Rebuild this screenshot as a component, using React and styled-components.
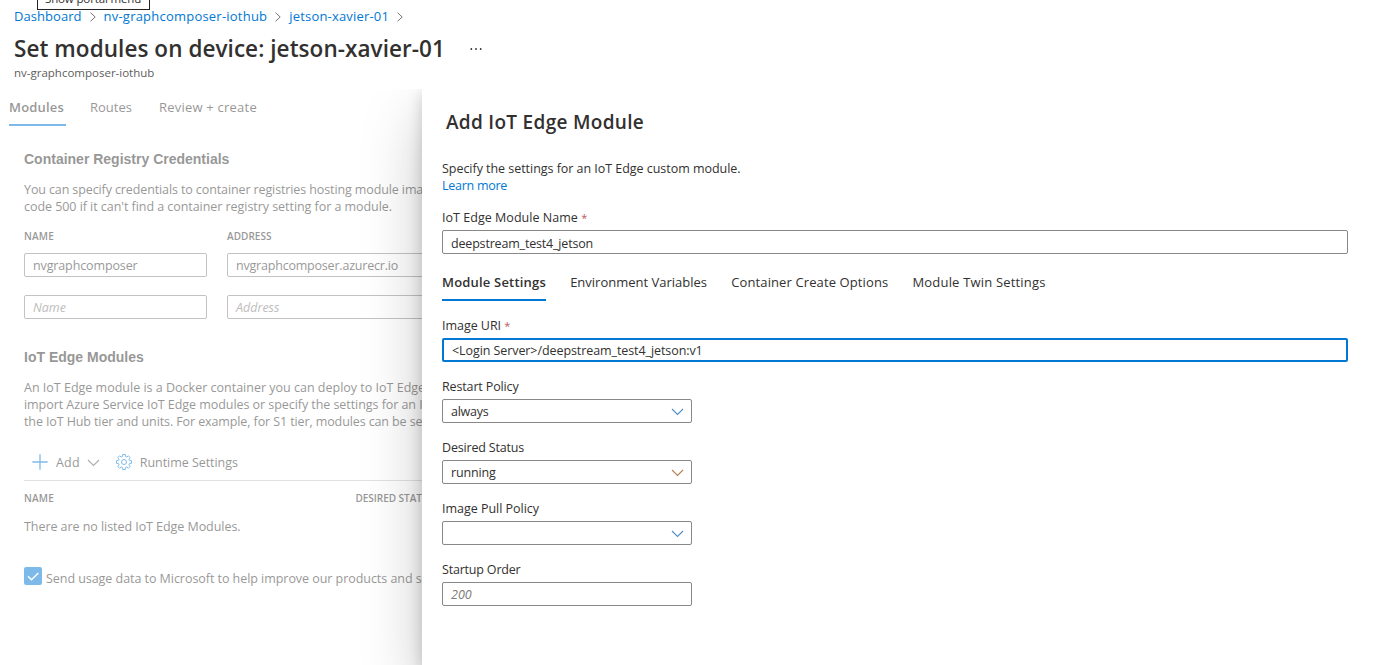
import React from 'react';
import styled, { createGlobalStyle } from 'styled-components';

const blue = '#0078d4';
const ink = '#323130';

const GlobalStyle = createGlobalStyle`
  * { box-sizing: border-box; }
  body {
    margin: 0;
    background: #fff;
    color: ${ink};
    font: 12.5px/17px "Open Sans", "Noto Sans", sans-serif;
  }
`;

const Page = styled.div`
  height: 665px;
  display: flex;
  flex-direction: column;
  overflow: hidden;
  position: relative;
  white-space: nowrap;
`;

const Text = styled.span`
  letter-spacing: ${(p) => p.$ls || 0}px;
`;

const Line = styled(Text)`
  display: block;
`;

const Tooltip = styled.div`
  position: absolute;
  top: -14px;
  left: 37px;
  width: 113px;
  height: 24px;
  padding-left: 7px;
  border: 1px solid #222;
  background: #fff;
  font-size: 11.5px;
  line-height: 23px;
  letter-spacing: -0.14px;
`;

const Header = styled.header`
  height: 89px;
  flex: none;
  padding: 8px 14px 0;
`;

const Breadcrumb = styled.nav`
  display: flex;
  align-items: center;
  font-size: 13px;
  height: 17px;
  svg { margin: 0 7.5px 0 8px; }
`;

const Crumb = styled.a`
  color: ${blue};
  letter-spacing: ${(p) => p.$ls}px;
`;

const TitleRow = styled.div`
  display: flex;
  align-items: center;
  gap: 25px;
  margin-top: 9px;
`;

const Title = styled.h1`
  margin: 0;
  font-size: 22.5px;
  font-weight: 600;
  line-height: 30px;
  letter-spacing: 0.06px;
`;

const Subtitle = styled.div`
  margin-top: 1px;
  font-size: 11.5px;
  line-height: 16px;
  color: #605e5c;
`;

const Body = styled.div`
  flex: 1;
  min-height: 0;
  display: flex;
  overflow: hidden;
`;

const Main = styled.main`
  width: 422px;
  flex: none;
  overflow: hidden;
  padding: 10px 0 0 24px;
`;

const Faded = styled.div`
  opacity: 0.5;
`;

const TabBar = styled.div`
  display: flex;
  gap: ${(p) => p.$gap}px;
  margin: ${(p) => p.$margin || 0};
  font-size: 13px;
`;

const Tab = styled.div`
  padding: 0 ${(p) => p.$pad || 0}px 8px 0;
  font-weight: ${(p) => (p.$active ? 600 : 400)};
  border-bottom: 2px solid ${(p) => (p.$active ? blue : 'transparent')};
  letter-spacing: ${(p) => p.$ls}px;
`;

const Heading = styled.h2`
  margin: ${(p) => p.$top}px 0 12px;
  font: 700 14px/20px "Liberation Sans", Arial, sans-serif;
`;

const Columns = styled.div`
  display: grid;
  grid-template-columns: ${(p) => p.$cols};
  column-gap: ${(p) => p.$gap || 0}px;
  margin-top: ${(p) => p.$top}px;
`;

const ColumnHead = styled.div`
  font-size: 10px;
  font-weight: 600;
  line-height: 14px;
  letter-spacing: ${(p) => p.$ls}px;
`;

const Box = styled.div`
  display: flex;
  align-items: center;
  justify-content: space-between;
  width: ${(p) => p.$w || 'auto'};
  height: 24px;
  padding: ${(p) => p.$drop || 2}px 7px 0 8px;
  border: 1px solid #8a8886;
  border-radius: 2px;
  background: #fff;
  line-height: 20px;
  letter-spacing: ${(p) => p.$ls || 0}px;
`;

const FocusBox = styled(Box)`
  border: 2px solid ${blue};
`;

const Placeholder = styled.span`
  font-style: italic;
  color: #7d7b79;
`;

const Toolbar = styled.div`
  display: flex;
  height: 27px;
  margin-top: 24px;
  padding-left: 8px;
  border-bottom: 1px solid #c8c6c4;
`;

const ToolButton = styled.div`
  display: flex;
  gap: 8px;
  margin-right: ${(p) => p.$after || 0}px;
`;

const ChevronSlot = styled.span`
  display: flex;
  align-items: center;
  height: 17px;
  margin-left: -0.6px;
`;

const Empty = styled.div`
  margin-top: 13px;
  letter-spacing: -0.057px;
`;

const CheckRow = styled.div`
  display: flex;
  gap: 4px;
  margin-top: 32px;
  letter-spacing: -0.048px;
`;

const CheckBox = styled.div`
  width: 18px;
  height: 18px;
  flex: none;
  border-radius: 2px;
  background: ${blue};
`;

const CheckLabel = styled.div`
  min-width: 0;
  overflow: hidden;
  padding-top: 3px;
`;

const Panel = styled.aside`
  flex: 1;
  position: relative;
  padding: 20px 41px 0 20px;
  background: #fff;
  box-shadow: 0 25.6px 57.6px rgba(0, 0, 0, 0.22), 0 4.8px 14.4px rgba(0, 0, 0, 0.18);
`;

const PanelTitle = styled.h2`
  margin: 0 0 25px 4px;
  font-size: 19px;
  font-weight: 600;
  line-height: 26px;
  letter-spacing: 0.3px;
`;

const Link = styled.a`
  display: block;
  color: ${blue};
  letter-spacing: -0.27px;
`;

const Field = styled.div`
  margin-top: ${(p) => p.$top || 16}px;
`;

const Label = styled.div`
  margin-bottom: 4px;
  letter-spacing: ${(p) => p.$ls || 0}px;
`;

const Required = styled.span`
  color: #b95c60;
  font-size: 11px;
  line-height: 1;
  letter-spacing: 0;
`;

const CrumbArrow = () => (
  <svg width="6.5" height="10" viewBox="0 0 6.5 10" fill="none" stroke="#797775">
    <path d="M0.5 0.7 5.2 5 0.5 9.3" />
  </svg>
);

const Chevron = ({ color }) => (
  <svg width="13" height="8" viewBox="0 0 13 8" fill="none" stroke={color} strokeWidth="1.1">
    <path d="M1 1 6.5 6.5 12 1" />
  </svg>
);

const PlusIcon = () => (
  <svg width="16" height="16" viewBox="0 0 16 16" stroke={blue} strokeWidth="1.3">
    <path d="M8 0.3V15.7M0.3 8H15.7" />
  </svg>
);

const gearPath = Array.from({ length: 8 }, (_, i) => {
  const pt = (r, deg) => {
    const a = ((i * 45 + deg) * Math.PI) / 180;
    return `${(8 + r * Math.cos(a)).toFixed(2)} ${(8 + r * Math.sin(a)).toFixed(2)}`;
  };
  return `${i ? 'L' : 'M'}${pt(5.8, -14)}L${pt(7.6, -10)}L${pt(7.6, 10)}L${pt(5.8, 14)}Q${pt(5.3, 22.5)} ${pt(5.8, 31)}`;
}).join('') + 'Z';

const GearIcon = () => (
  <svg width="16" height="16" viewBox="0 0 16 16" fill="none" stroke={blue} strokeWidth="1" strokeLinejoin="round">
    <path d={gearPath} />
    <circle cx="8" cy="8" r="2.5" />
  </svg>
);

const CheckIcon = () => (
  <svg width="18" height="18" viewBox="0 0 18 18" fill="none" stroke="#fff" strokeWidth="1.4">
    <path d="M4 9.2 7.5 12.7 14.3 5.9" />
  </svg>
);

const Dots = () => (
  <svg width="12" height="4" viewBox="0 0 12 4" fill={ink}>
    <circle cx="1.3" cy="2" r="0.9" />
    <circle cx="6" cy="2" r="0.9" />
    <circle cx="10.7" cy="2" r="0.9" />
  </svg>
);

export default function App() {
  return (
    <Page>
      <GlobalStyle />
      <Header>
        <Breadcrumb>
          <Crumb $ls={0.05}>Dashboard</Crumb>
          <CrumbArrow />
          <Crumb $ls={0.22}>nv-graphcomposer-iothub</Crumb>
          <CrumbArrow />
          <Crumb $ls={0.18}>jetson-xavier-01</Crumb>
          <CrumbArrow />
        </Breadcrumb>
        <TitleRow>
          <Title>Set modules on device: jetson-xavier-01</Title>
          <Dots />
        </TitleRow>
        <Subtitle>nv-graphcomposer-iothub</Subtitle>
      </Header>

      <Body>
        <Main>
          <Faded>
            <TabBar $gap={24} $margin="0 0 0 -15px">
              <Tab $active $ls={0.18} $pad={2}>Modules</Tab>
              <Tab $ls={0.01} $pad={3}>Routes</Tab>
              <Tab $ls={0.22}>Review + create</Tab>
            </TabBar>

            <Heading $top={23}>Container Registry Credentials</Heading>
            <Line $ls={-0.112}>You can specify credentials to container registries hosting module images</Line>
            <Line $ls={-0.051}>code 500 if it can't find a container registry setting for a module.</Line>
            <Columns $cols="183px 260px" $gap={20} $top={14}>
              <ColumnHead $ls={0.19}>NAME</ColumnHead>
              <ColumnHead $ls={0.04}>ADDRESS</ColumnHead>
            </Columns>
            <Columns $cols="183px 260px" $gap={20} $top={10}>
              <Box $ls={-0.126}>nvgraphcomposer</Box>
              <Box $ls={-0.205}>nvgraphcomposer.azurecr.io</Box>
            </Columns>
            <Columns $cols="183px 260px" $gap={20} $top={18}>
              <Box><Placeholder>Name</Placeholder></Box>
              <Box><Placeholder>Address</Placeholder></Box>
            </Columns>

            <Heading $top={28}>IoT Edge Modules</Heading>
            <Line>An IoT Edge module is a Docker container you can deploy to IoT Edge</Line>
            <Line $ls={-0.057}>import Azure Service IoT Edge modules or specify the settings for an IoT</Line>
            <Line $ls={-0.107}>the IoT Hub tier and units. For example, for S1 tier, modules can be set</Line>

            <Toolbar>
              <ToolButton $after={15.6}>
                <PlusIcon />
                <Text $ls={0.2}>Add</Text>
                <ChevronSlot><Chevron color="#605e5c" /></ChevronSlot>
              </ToolButton>
              <ToolButton>
                <GearIcon />
                <Text $ls={-0.05}>Runtime Settings</Text>
              </ToolButton>
            </Toolbar>
            <Columns $cols="331.5px auto" $top={10}>
              <ColumnHead $ls={0.19}>NAME</ColumnHead>
              <ColumnHead $ls={-0.03}>DESIRED STATUS</ColumnHead>
            </Columns>
            <Empty>There are no listed IoT Edge Modules.</Empty>
            <CheckRow>
              <CheckBox><CheckIcon /></CheckBox>
              <CheckLabel>Send usage data to Microsoft to help improve our products and services</CheckLabel>
            </CheckRow>
          </Faded>
        </Main>

        <Panel>
          <PanelTitle>Add IoT Edge Module</PanelTitle>
          <Line $ls={-0.039}>Specify the settings for an IoT Edge custom module.</Line>
          <Link>Learn more</Link>
          <Field $top={15}>
            <Label $ls={0.03}>IoT Edge Module Name <Required>*</Required></Label>
            <Box $drop={4} $ls={-0.18}>deepstream_test4_jetson</Box>
          </Field>
          <TabBar $gap={24.2} $margin="20px 0 0">
            <Tab $active $ls={0.19}>Module Settings</Tab>
            <Tab>Environment Variables</Tab>
            <Tab $ls={0.11}>Container Create Options</Tab>
            <Tab $ls={0.18}>Module Twin Settings</Tab>
          </TabBar>
          <Field>
            <Label $ls={-0.04}>Image URI <Required>*</Required></Label>
            <FocusBox $ls={-0.08}>&lt;Login Server&gt;/deepstream_test4_jetson:v1</FocusBox>
          </Field>
          <Field>
            <Label $ls={-0.14}>Restart Policy</Label>
            <Box $w="250px" $ls={-0.24}>always <Chevron color="#4f8fc4" /></Box>
          </Field>
          <Field>
            <Label $ls={-0.18}>Desired Status</Label>
            <Box $w="250px" $ls={-0.17}>running <Chevron color="#b5804f" /></Box>
          </Field>
          <Field>
            <Label $ls={-0.02}>Image Pull Policy</Label>
            <Box $w="250px"><span /><Chevron color="#4f8fc4" /></Box>
          </Field>
          <Field>
            <Label $ls={-0.19}>Startup Order</Label>
            <Box $w="250px"><Placeholder>200</Placeholder></Box>
          </Field>
        </Panel>
      </Body>
      <Tooltip>Show portal menu</Tooltip>
    </Page>
  );
}
